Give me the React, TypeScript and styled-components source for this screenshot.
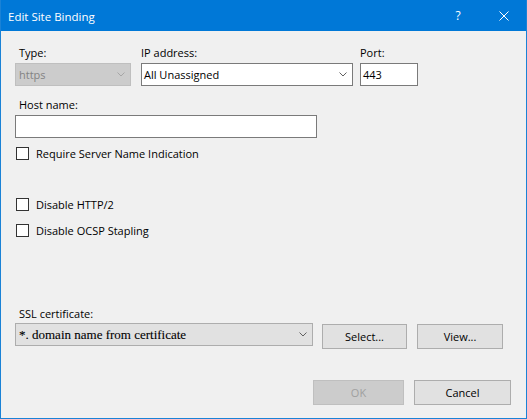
import React from "react";
import styled, { createGlobalStyle } from "styled-components";

const GlobalStyle = createGlobalStyle`
  html, body {
    margin: 0;
    padding: 0;
    background: #ffffff;
  }
  * {
    box-sizing: border-box;
  }
`;

const uiFont = `"Open Sans", "Noto Sans", "Liberation Sans", sans-serif`;

// Window frame
const Window = styled.div`
  width: 527px;
  height: 419px;
  border: 1px solid #1a82d6;
  border-top: none;
  background: #f0f0f0;
  font-family: ${uiFont};
  font-size: 11px;
  color: #000000;
  display: flex;
  flex-direction: column;
  overflow: hidden;
`;

const TitleBar = styled.div`
  height: 31px;
  background: #0078d7;
  color: #ffffff;
  display: flex;
  align-items: center;
  padding-left: 8px;
  margin: 0 -1px;
  flex-shrink: 0;
`;

const Title = styled.div`
  flex: 1;
  font-size: 11.5px;
  line-height: 15px;
  padding-top: 1px;
`;

const TitleButton = styled.div<{ $width: number }>`
  width: ${({ $width }) => $width}px;
  height: 31px;
  display: flex;
  align-items: center;
  justify-content: center;
  color: #ffffff;
  font-size: 12px;
`;

const Content = styled.div`
  flex: 1;
  padding: 14px 15px 0 14px;
  display: flex;
  flex-direction: column;
`;

const FieldRow = styled.div`
  display: flex;
  align-items: flex-start;
`;

const Field = styled.div<{ $width: number; $gap?: number }>`
  width: ${({ $width }) => $width}px;
  margin-left: ${({ $gap }) => $gap ?? 0}px;
  display: flex;
  flex-direction: column;
`;

const Label = styled.div<{ $indent?: number; $top?: number; $below?: number }>`
  line-height: 15px;
  height: 15px;
  padding-left: ${({ $indent }) => $indent ?? 0}px;
  margin-top: ${({ $top }) => $top ?? 0}px;
  margin-bottom: ${({ $below }) => $below ?? 3}px;
  white-space: nowrap;
`;

const TextBox = styled.div<{ $width?: number }>`
  width: ${({ $width }) => ($width ? `${$width}px` : "100%")};
  height: 23px;
  border: 1px solid #7a7a7a;
  background: #ffffff;
  padding-left: 2px;
  line-height: 21px;
  white-space: nowrap;
`;

const Combo = styled.div<{ $variant: "edit" | "disabled" | "button"; $width?: number }>`
  width: ${({ $width }) => ($width ? `${$width}px` : "100%")};
  height: 23px;
  display: flex;
  align-items: center;
  justify-content: space-between;
  padding: 0 5px 0 ${({ $variant }) => ($variant === "edit" ? 2 : 3)}px;
  border: 1px solid
    ${({ $variant }) =>
      $variant === "edit" ? "#7a7a7a" : $variant === "disabled" ? "#bfbfbf" : "#adadad"};
  background: ${({ $variant }) =>
    $variant === "edit" ? "#ffffff" : $variant === "disabled" ? "#cccccc" : "#e1e1e1"};
  color: ${({ $variant }) => ($variant === "disabled" ? "#838383" : "#000000")};
  white-space: nowrap;
`;

const CertText = styled.span`
  font-family: "Liberation Serif", "Times New Roman", serif;
  font-size: 13px;
  -webkit-text-stroke: 0.1px #000000;
`;

const Chevron = ({ color }: { color: string }) => (
  <svg width="8" height="5" viewBox="0 0 8 5" style={{ flexShrink: 0 }}>
    <polyline points="0.5,0.5 4,4 7.5,0.5" fill="none" stroke={color} strokeWidth="1" />
  </svg>
);

const CheckRow = styled.label<{ $top: number }>`
  display: flex;
  align-items: center;
  height: 15px;
  margin-top: ${({ $top }) => $top}px;
  line-height: 15px;
`;

const CheckBox = styled.span`
  width: 13px;
  height: 13px;
  border: 1px solid #333333;
  background: #ffffff;
  margin: 0 7px 0 1px;
  flex-shrink: 0;
`;

const ActionRow = styled.div<{ $top: number; $end?: boolean }>`
  display: flex;
  align-items: flex-start;
  justify-content: ${({ $end }) => ($end ? "flex-end" : "flex-start")};
  margin-top: ${({ $top }) => $top}px;
`;

const Button = styled.div<{ $width: number; $gap?: number; $disabled?: boolean }>`
  width: ${({ $width }) => $width}px;
  height: 25px;
  margin-left: ${({ $gap }) => $gap ?? 0}px;
  margin-top: 1px;
  border: 1px solid ${({ $disabled }) => ($disabled ? "#bfbfbf" : "#adadad")};
  background: ${({ $disabled }) => ($disabled ? "#cccccc" : "#e1e1e1")};
  color: ${({ $disabled }) => ($disabled ? "#a0a0a0" : "#000000")};
  display: flex;
  align-items: center;
  justify-content: center;
`;

const CloseIcon = () => (
  <svg width="10" height="10" viewBox="0 0 10 10">
    <path d="M0.5 0.5 L9.5 9.5 M9.5 0.5 L0.5 9.5" stroke="#ffffff" strokeWidth="1" />
  </svg>
);

const checks = [
  { label: "Require Server Name Indication", top: 8 },
  { label: "Disable HTTP/2", top: 36 },
  { label: "Disable OCSP Stapling", top: 11 },
];

export default function App() {
  return (
    <>
      <GlobalStyle />
      <Window>
        <TitleBar>
          <Title>Edit Site Binding</Title>
          <TitleButton $width={46}>?</TitleButton>
          <TitleButton $width={46}>
            <CloseIcon />
          </TitleButton>
        </TitleBar>

        <Content>
          <FieldRow>
            <Field $width={116}>
              <Label $indent={4}>Type:</Label>
              <Combo $variant="disabled">
                <span>https</span>
                <Chevron color="#a6a6a6" />
              </Combo>
            </Field>
            <Field $width={212} $gap={10}>
              <Label>IP address:</Label>
              <Combo $variant="edit">
                <span>All Unassigned</span>
                <Chevron color="#606060" />
              </Combo>
            </Field>
            <Field $width={58} $gap={7}>
              <Label>Port:</Label>
              <TextBox>443</TextBox>
            </Field>
          </FieldRow>

          <Label $indent={4} $top={11}>
            Host name:
          </Label>
          <TextBox $width={302} />

          {checks.map((c) => (
            <CheckRow key={c.label} $top={c.top}>
              <CheckBox />
              {c.label}
            </CheckRow>
          ))}

          <Label $indent={4} $top={68} $below={2}>
            SSL certificate:
          </Label>
          <ActionRow $top={0}>
            <Combo $variant="button" $width={298}>
              <CertText>*. domain name from certificate</CertText>
              <Chevron color="#606060" />
            </Combo>
            <Button $width={85} $gap={9}>
              Select...
            </Button>
            <Button $width={86} $gap={10}>
              View...
            </Button>
          </ActionRow>

          <ActionRow $top={30} $end>
            <Button $width={91} $disabled>
              OK
            </Button>
            <Button $width={97} $gap={10}>
              Cancel
            </Button>
          </ActionRow>
        </Content>
      </Window>
    </>
  );
}
